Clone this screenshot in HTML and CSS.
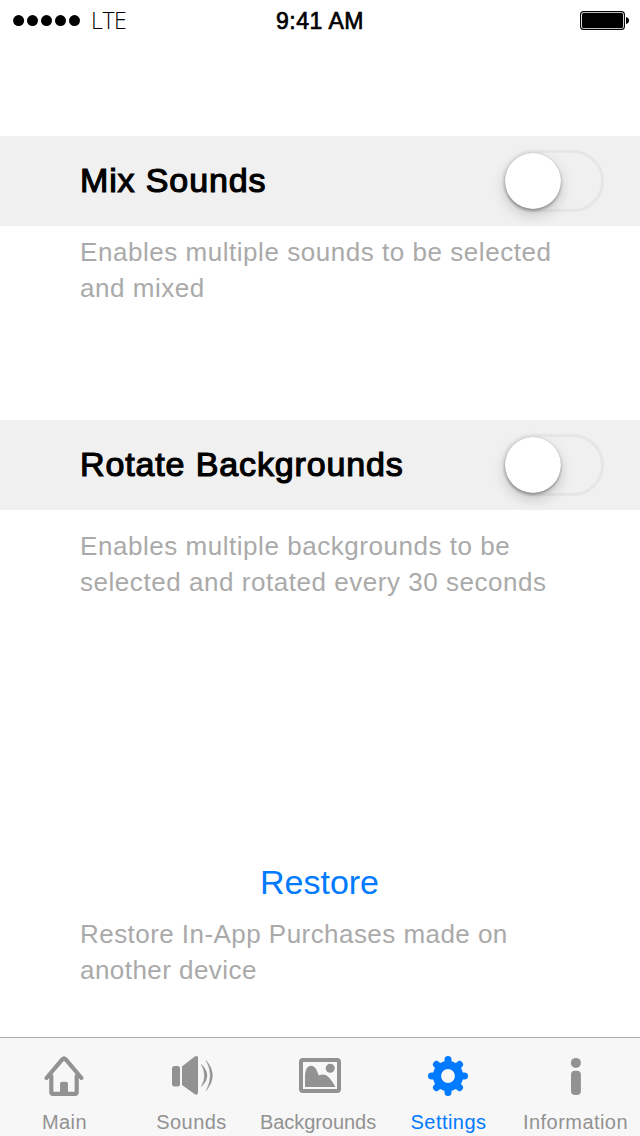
FILE: index.html
```html
<!DOCTYPE html>
<html lang="en">
<head>
<meta charset="utf-8">
<title>Settings</title>
<link rel="stylesheet" href="styles.css">
</head>
<body>
<div class="screen">
  <header class="status">
    <div class="carrier">
      <svg width="68" height="12" viewBox="0 0 68 12"><circle cx="5.6" cy="5.600" r="5.500"/><circle cx="19.5" cy="5.600" r="5.500"/><circle cx="33.5" cy="5.600" r="5.500"/><circle cx="47.5" cy="5.600" r="5.500"/><circle cx="61.5" cy="5.600" r="5.500"/></svg>
      <span class="network">LTE</span>
    </div>
    <div class="clock">9:41 AM</div>
    <svg class="battery" width="50" height="20" viewBox="0 0 50 20"><rect x=".6" y=".6" width="43.8" height="17.8" rx="3" fill="none" stroke="#000" stroke-width="1.1"/><rect x="2" y="2" width="41" height="15" rx="1.5"/><path d="M46 6q3 .6 3 3.500t-3 3.500z"/></svg>
  </header>
  <main class="content">
    <section class="group mix">
      <div class="row"><h2 class="title">Mix Sounds</h2><div class="switch"><span class="knob"></span></div></div>
      <p class="note">Enables multiple sounds to be selected<br>and mixed</p>
    </section>
    <section class="group rotate">
      <div class="row"><h2 class="title">Rotate Backgrounds</h2><div class="switch"><span class="knob"></span></div></div>
      <p class="note">Enables multiple backgrounds to be<br>selected and rotated every 30 seconds</p>
    </section>
    <section class="purchases">
      <a class="restore">Restore</a>
      <p class="note">Restore In-App Purchases made on<br>another device</p>
    </section>
  </main>
  <nav class="tabs">
    <a class="tab">
      <svg class="icon" width="44" height="44" viewBox="0 0 44 44"><path d="M4.500 24 20.500 5.200Q22 3.500 23.500 5.200L39.500 24M9.300 22V38Q9.300 39.800 11 39.800H33Q34.700 39.800 34.700 38V22" fill="none" stroke="currentColor" stroke-width="4.200" stroke-linecap="round" stroke-linejoin="round"/><path d="M18 40V29.700q0-2 2-2h4q2 0 2 2V40z"/></svg>
      <span class="label">Main</span>
    </a>
    <a class="tab">
      <svg class="icon" width="44" height="44" viewBox="0 0 44 44"><rect x="2" y="12" width="8" height="20.500" rx="2.500"/><path d="M12 12.500 24.500 2.700Q28 .6 28 4V38.500Q28 42 24.500 40L12 31z"/><path d="M31.500 10.500Q42.500 21.500 31.500 32.500Q37.500 21.500 31.500 10.500z" stroke="currentColor" stroke-width=".5"/><path d="M36 6.200Q49 21.500 36 36.800Q44.500 21.500 36 6.200z" stroke="currentColor" stroke-width=".4"/></svg>
      <span class="label">Sounds</span>
    </a>
    <a class="tab">
      <svg class="icon" width="44" height="44" viewBox="0 0 44 44"><rect x="3" y="6" width="38" height="31" rx="2" fill="none" stroke="currentColor" stroke-width="4"/><path d="M7 33V23C7 15 9.500 11.700 13 11.700C17 11.700 19 16 20.700 21.500Q27 18.500 31 23.500Q34.500 27.500 37.500 33z"/><circle cx="32.200" cy="14.300" r="4.500"/></svg>
      <span class="label wide">Backgrounds</span>
    </a>
    <a class="tab active">
      <svg class="icon" width="44" height="44" viewBox="0 0 44 44"><g stroke="currentColor" stroke-width="7" stroke-linecap="round"><path d="M22 5.500V11M22 33v5.500M5.500 22H11M33 22h5.500M10.500 10.500l3.500 3.500M30 30l3.500 3.500M10.500 33.500l3.500-3.500M30 14l3.500-3.500"/></g><circle cx="22" cy="22" r="11" fill="none" stroke="currentColor" stroke-width="8.200"/></svg>
      <span class="label flush">Settings</span>
    </a>
    <a class="tab">
      <svg class="icon" width="44" height="44" viewBox="0 0 44 44"><circle cx="21.900" cy="8.900" r="5"/><rect x="17" y="16.700" width="9.900" height="24.300" rx="4"/></svg>
      <span class="label">Information</span>
    </a>
  </nav>
</div>
</body>
</html>
```
FILE: styles.css
```css
* { box-sizing: border-box; margin: 0; padding: 0; }
body { background: #fff; font-family: "Liberation Sans", Arial, sans-serif; color: #000; }
.screen { width: 640px; height: 1136px; display: flex; flex-direction: column; overflow: hidden; }
.status { height: 40px; display: grid; grid-template-columns: 1fr auto 1fr; align-items: center; padding: 1px 11px 0 13px; }
.carrier { display: flex; align-items: center; gap: 10px; }
.network { font-family: "Open Sans", sans-serif; font-weight: 300; font-size: 23px; line-height: 30px; letter-spacing: -.4px; padding-bottom: 2px; }
.clock { font-size: 23px; line-height: 30px; letter-spacing: .5px; margin-left: -2px; -webkit-text-stroke: .7px #000; }
.battery { justify-self: end; margin-right: -1px; }
.content { flex: 1; padding-top: 96px; }
.group { height: 284px; }
.row { height: 90px; background: #f0f0f0; display: flex; align-items: center; justify-content: space-between; padding: 0 36px 0 80px; }
.title { padding-bottom: 2px; font-size: 34px; line-height: 40px; font-weight: 400; letter-spacing: .87px; -webkit-text-stroke: 1.2px #000; }
.switch { width: 102px; height: 62px; border: 3px solid #e6e6e6; border-radius: 31px; }
.knob { display: block; width: 56px; height: 56px; border-radius: 50%; background: #fff; box-shadow: 0 0 1px rgba(0,0,0,.3), 0 2px 3px rgba(0,0,0,.28), 0 6px 14px rgba(0,0,0,.18); }
.note { padding: 8px 80px 0; font-size: 26px; line-height: 36px; letter-spacing: .54px; color: #aaa; white-space: nowrap; }
.rotate .note { padding-top: 18px; }
.purchases { padding-top: 156px; }
.restore { display: block; padding-right: 1px; text-align: center; font-size: 34px; line-height: 44px; color: #007aff; }
.purchases .note { padding-top: 12px; letter-spacing: .45px; }
.tabs { height: 99px; border-top: 1px solid #acacac; background: #f7f7f7; display: grid; grid-template-columns: repeat(5, 128px); color: #929292; }
.tab { display: flex; flex-direction: column; align-items: center; padding-top: 16px; }
.active { color: #007aff; }
.icon { fill: currentColor; }
.label { margin-top: 12px; padding-right: 1px; font-size: 20px; line-height: 24px; letter-spacing: .45px; }
.tab:first-child .label, .flush { padding-right: 0; padding-left: 1px; }
.wide { letter-spacing: -.05px; padding-right: 4px; }
```
